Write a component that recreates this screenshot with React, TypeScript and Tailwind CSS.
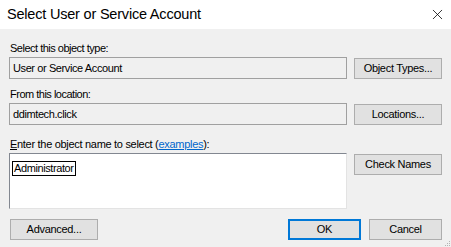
import { X } from 'lucide-react';

const font = { fontFamily: '"Liberation Sans", Arial, sans-serif' };

function Btn({ label, primary, className = '' }: { label: React.ReactNode; primary?: boolean; className?: string }) {
  return (
    <button
      className={`h-[21px] bg-[#e1e1e1] text-[11px] tracking-[-0.3px] leading-none text-black ${primary ? 'border-2 border-[#0078d7]' : 'border border-[#adadad]'} ${className}`}
    >
      {label}
    </button>
  );
}

function ReadBox({ value }: { value: string }) {
  return (
    <div className="w-[338px] h-[22px] border border-[#a0a0a0] bg-[#f0f0f0] pl-[3px] pt-[5px] text-[11px] tracking-[-0.4px] leading-none text-black">
      {value}
    </div>
  );
}

export default function App() {
  return (
    <div className="w-[451px] h-[247px] bg-[#f0f0f0] flex flex-col overflow-hidden relative" style={font}>
      <div className="h-[29px] bg-white flex items-center justify-between pl-[7px] pr-[4px] shrink-0">
        <span className="text-[14.5px] text-black tracking-[-0.2px]">Select User or Service Account</span>
        <X size={17} strokeWidth={1.1} className="text-black mr-[1px]" />
      </div>

      <div className="flex flex-col pl-[9px] pr-[9px]">
        <div className="mt-[13px] h-[13px] text-[11px] tracking-[-0.5px] leading-[13px] text-black pl-[1px]">Select this object type:</div>
        <div className="mt-[2px] flex items-center gap-[7px]">
          <ReadBox value="User or Service Account" />
          <Btn label="Object Types..." className="w-[88px]" />
        </div>

        <div className="mt-[9px] h-[13px] text-[11px] tracking-[-0.5px] leading-[13px] text-black pl-[1px]">From this location:</div>
        <div className="mt-[2px] flex items-center gap-[7px]">
          <ReadBox value="ddimtech.click" />
          <Btn label="Locations..." className="w-[88px]" />
        </div>

        <div className="mt-[13px] h-[13px] text-[11px] tracking-[-0.3px] leading-[13px] text-black pl-[1px]">
          <span className="underline">E</span>nter the object name to select (<span className="text-[#0066cc] underline">examples</span>):
        </div>
        <div className="mt-[2px] flex items-start gap-[7px]">
          <div className="w-[338px] h-[56px] bg-white border border-[#e3e3e3] border-t-[#828790] border-l-[#828790] pl-[2px] pt-[1px]">
            <span className="inline-block border border-black px-[1px] text-[11px] tracking-[-0.4px] leading-[13px] text-black">Administrator</span>
          </div>
          <Btn label="Check Names" className="w-[88px] mt-[1px]" />
        </div>

        <div className="mt-[10px] flex items-center">
          <Btn label="Advanced..." className="w-[88px] ml-[1px]" />
          <div className="flex-1" />
          <Btn label="OK" primary className="w-[73px] h-[21px]" />
          <Btn label="Cancel" className="w-[73px] ml-[8px]" />
        </div>
      </div>

      <div className="absolute right-[1px] bottom-[1px] grid grid-cols-3 gap-[1px]">
        <span className="w-[1px] h-[1px]" />
        <span className="w-[1px] h-[1px]" />
        <span className="w-[1px] h-[1px] bg-[#b4b4b4]" />
        <span className="w-[1px] h-[1px]" />
        <span className="w-[1px] h-[1px] bg-[#b4b4b4]" />
        <span className="w-[1px] h-[1px] bg-[#b4b4b4]" />
        <span className="w-[1px] h-[1px] bg-[#b4b4b4]" />
        <span className="w-[1px] h-[1px] bg-[#b4b4b4]" />
        <span className="w-[1px] h-[1px] bg-[#b4b4b4]" />
      </div>
    </div>
  );
}
